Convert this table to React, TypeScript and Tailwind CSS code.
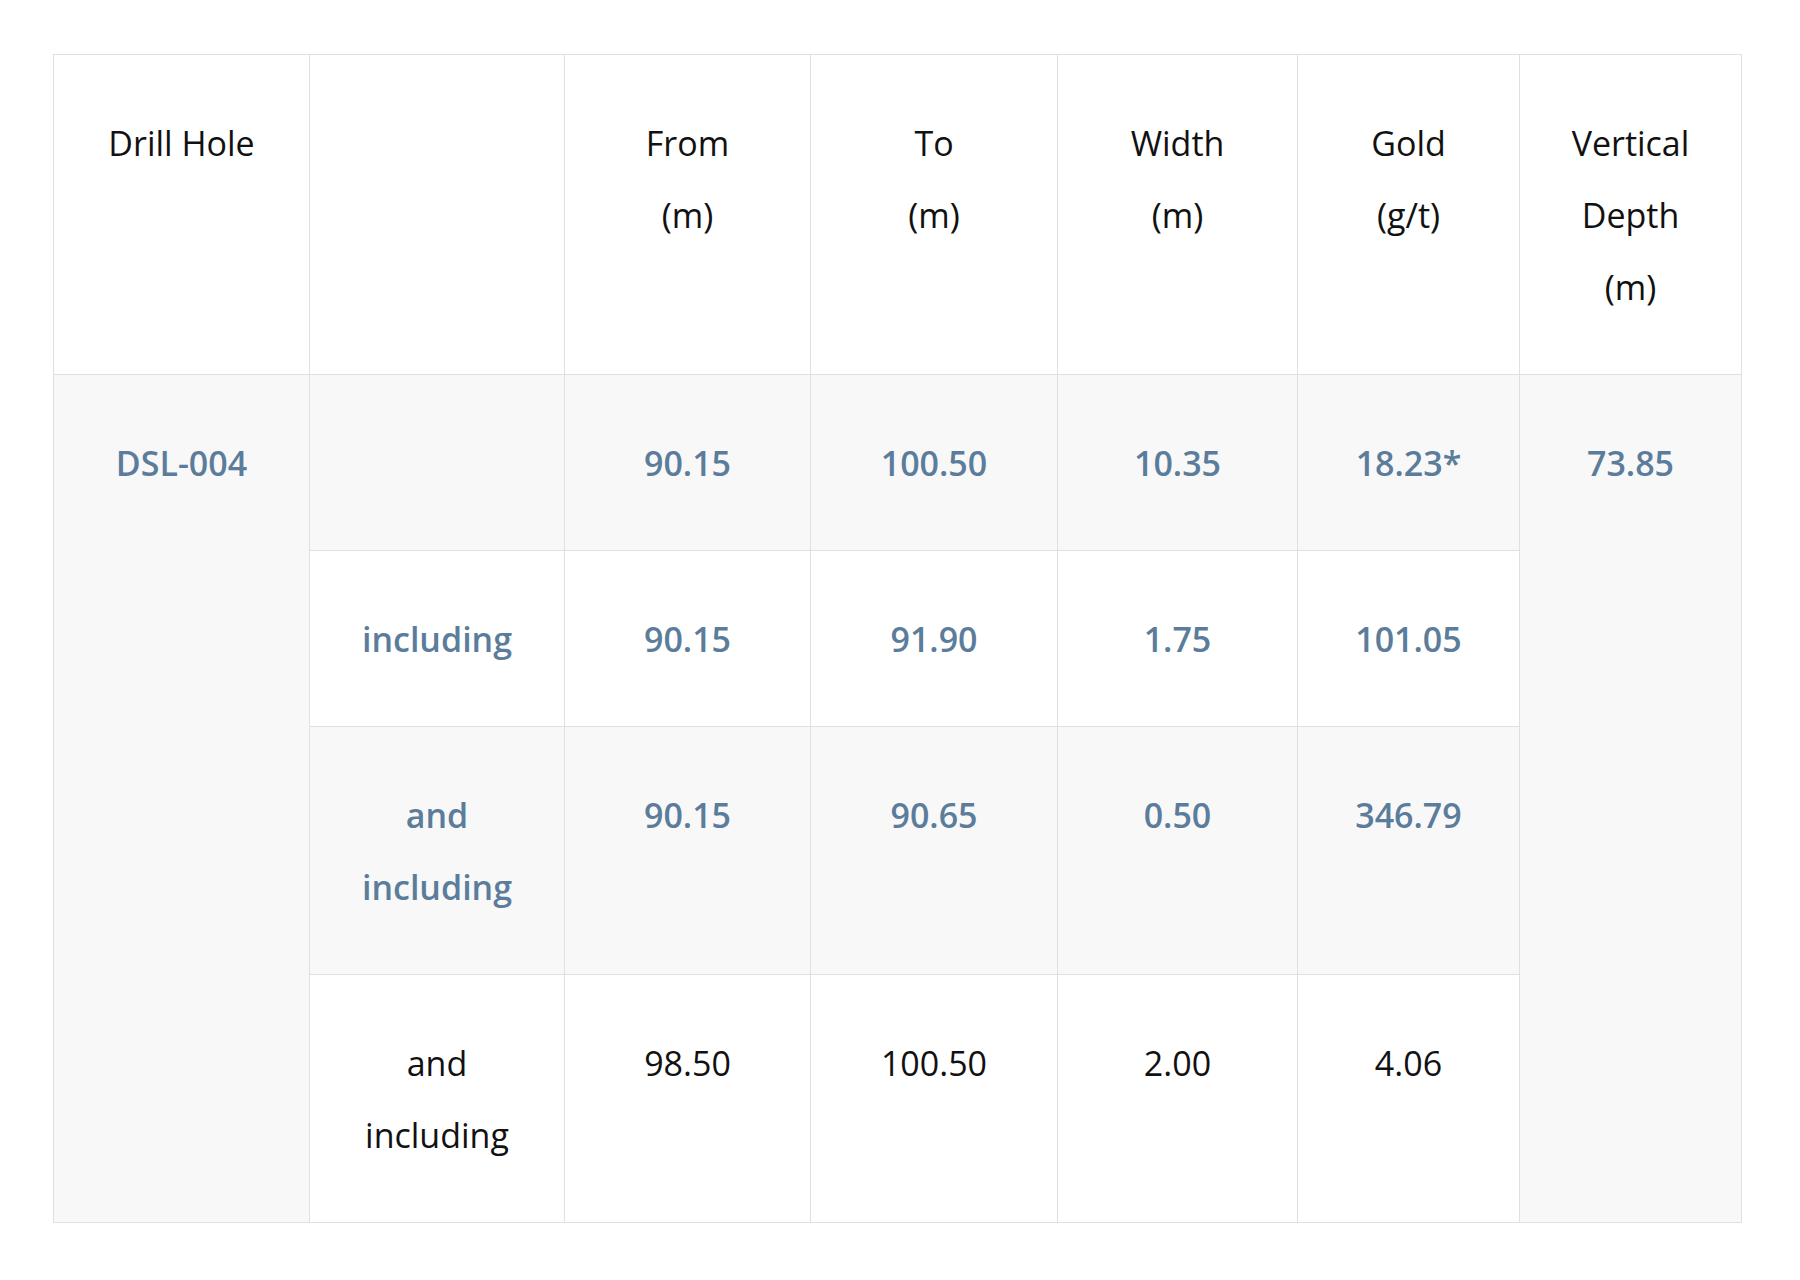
import React from "react";

type Cell = { text: string; tone: "blue" | "black" };

const rows: { label: string; from: string; to: string; width: string; gold: string; tone: "blue" | "black" }[] = [
  { label: "including", from: "90.15", to: "91.90", width: "1.75", gold: "101.05", tone: "blue" },
  { label: "and including", from: "90.15", to: "90.65", width: "0.50", gold: "346.79", tone: "blue" },
  { label: "and including", from: "98.50", to: "100.50", width: "2.00", gold: "4.06", tone: "black" },
];

const td = "border border-[#e0e0e0] px-[30px] pt-[52px] pb-[51px] align-top text-center";
const blue = "font-semibold text-[#5b7d9b]";
const black = "font-normal text-[#111111]";

const Td: React.FC<{ cell: Cell; rowSpan?: number }> = ({ cell, rowSpan }) => (
  <td rowSpan={rowSpan} className={`${td} ${cell.tone === "blue" ? blue : black}`}>
    {cell.text}
  </td>
);

export default function App() {
  return (
    <div className="min-h-screen bg-white pt-[54px] pl-[53px]" style={{ fontFamily: '"Open Sans", "Noto Sans", sans-serif' }}>
      <table className="table-fixed border-collapse w-[1688px] text-[34px] leading-[72px]">
        <colgroup>
          <col className="w-[256px]" />
          <col className="w-[255px]" />
          <col className="w-[246px]" />
          <col className="w-[247px]" />
          <col className="w-[240px]" />
          <col className="w-[222px]" />
          <col className="w-[222px]" />
        </colgroup>
        <thead>
          <tr className="bg-white text-[#111111]">
            <th className={`${td} font-normal`}>Drill Hole</th>
            <th className={`${td} font-normal`}></th>
            <th className={`${td} font-normal`}>From<br />(m)</th>
            <th className={`${td} font-normal`}>To<br />(m)</th>
            <th className={`${td} font-normal`}>Width<br />(m)</th>
            <th className={`${td} font-normal`}>Gold<br />(g/t)</th>
            <th className={`${td} font-normal`}>Vertical<br />Depth<br />(m)</th>
          </tr>
        </thead>
        <tbody>
          <tr className="bg-[#f8f8f8]">
            <Td rowSpan={4} cell={{ text: "DSL-004", tone: "blue" }} />
            <td className={td}></td>
            <Td cell={{ text: "90.15", tone: "blue" }} />
            <Td cell={{ text: "100.50", tone: "blue" }} />
            <Td cell={{ text: "10.35", tone: "blue" }} />
            <Td cell={{ text: "18.23*", tone: "blue" }} />
            <Td rowSpan={4} cell={{ text: "73.85", tone: "blue" }} />
          </tr>
          {rows.map((r, i) => (
            <tr key={i} className={i % 2 === 1 ? "bg-[#f8f8f8]" : "bg-white"}>
              <Td cell={{ text: r.label, tone: r.tone }} />
              <Td cell={{ text: r.from, tone: r.tone }} />
              <Td cell={{ text: r.to, tone: r.tone }} />
              <Td cell={{ text: r.width, tone: r.tone }} />
              <Td cell={{ text: r.gold, tone: r.tone }} />
            </tr>
          ))}
        </tbody>
      </table>
    </div>
  );
}
